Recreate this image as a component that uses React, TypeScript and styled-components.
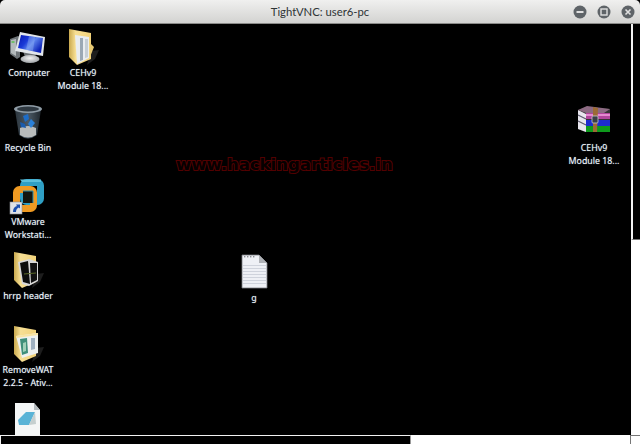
import React from 'react'
import styled, { createGlobalStyle } from 'styled-components'

const GlobalStyle = createGlobalStyle`
  html, body {
    margin: 0;
    padding: 0;
    background: #000;
    overflow: hidden;
  }
`

const ComputerIcon = () => (
  <svg width="40" height="40" viewBox="0 0 40 40">
    <defs>
      <linearGradient id="pcScreen" x1="0" y1="0" x2="1" y2="0.6">
        <stop offset="0" stopColor="#0616b0" />
        <stop offset="0.4" stopColor="#1a3ad8" />
        <stop offset="0.62" stopColor="#5f86ee" />
        <stop offset="1" stopColor="#0c22b8" />
      </linearGradient>
      <radialGradient id="pcStand" cx="0.5" cy="0.4" r="0.7">
        <stop offset="0" stopColor="#f4f4f4" />
        <stop offset="1" stopColor="#8d9296" />
      </radialGradient>
    </defs>
    <path d="M1 12 L9 9 L11 10 L11 30 L8 32 L1 27 Z" fill="#6e7478" />
    <path d="M2 13 L7 12 L7 29 L2 26 Z" fill="#b4babc" />
    <rect x="2.5" y="14" width="3" height="2" fill="#6fbf6a" />
    <path d="M14 24 L16 30 L26 31 L27 27 Z" fill="#6c7175" />
    <ellipse cx="21" cy="32" rx="9.5" ry="4" fill="url(#pcStand)" />
    <path d="M6 24 L11 5 L36 10 L34 29 Z" fill="#e2e6ea" />
    <path d="M9 21 L12 8 L34 11 L32 26 Z" fill="url(#pcScreen)" />
    <path d="M20 9.2 L26 10 L24 24 L17 22.8 Z" fill="#8fb0f4" opacity="0.45" />
  </svg>
)

type FolderProps = { paper: 'white' | 'dark' | 'app' }

const FolderIcon = ({ paper }: FolderProps) => (
  <svg width="40" height="40" viewBox="0 0 40 40">
    <defs>
      <linearGradient id={`fold-${paper}`} x1="0" y1="0" x2="1" y2="0">
        <stop offset="0" stopColor="#c9a94e" />
        <stop offset="0.3" stopColor="#f7df94" />
        <stop offset="1" stopColor="#f2d27a" />
      </linearGradient>
    </defs>
    <path d="M28 24 L36 23 L32 32 L24 38 Z" fill="#2a2a2a" opacity="0.7" />
    <path d="M6 2 L28 6 L28 32 L14 38 L6 30 Z" fill={`url(#fold-${paper})`} />
    {paper === 'white' && (
      <g>
        <path d="M12 8 L26 10 L26 31 L14 37 Z" fill="#e9edf0" />
        <path d="M17 11 L20 11 L20 33 L17 34 Z" fill="#9aa8b4" />
        <path d="M22 12 L25 12 L25 30 L22 31 Z" fill="#c5ced5" />
        <path d="M27 16 L31 20 L27 30 Z" fill="#e6c872" />
      </g>
    )}
    {paper === 'dark' && (
      <g>
        <path d="M10 12 L21 9 L30 12 L30 31 L21 36 L14 34 Z" fill="#d8d8d8" />
        <path d="M12 13 L20 11 L22 34 L15 32 Z" fill="#0d0d0d" />
        <path d="M22 13 L29 13 L29 30 L23 33 Z" fill="#111" />
        <path d="M16 24 L28 23" stroke="#5c6a2a" strokeWidth="1" />
      </g>
    )}
    {paper === 'app' && (
      <g>
        <path d="M8 12 L30 9 L30 29 L14 34 Z" fill="#eef1f0" />
        <path d="M12 15 L19 14 L20 29 L14 31 Z" fill="#3f8f7a" />
        <path d="M15 19 L18 18 L18 27 L15 28 Z" fill="#9fd0b8" />
        <path d="M23 14 L27 14 L27 25 L23 26 Z" fill="#9fb0bf" />
        <path d="M8 12 L30 9 L30 11 L8 14 Z" fill="#f9e4a3" />
      </g>
    )}
  </svg>
)

const RecycleIcon = () => (
  <svg width="40" height="40" viewBox="0 0 40 40">
    <defs>
      <linearGradient id="binBody" x1="0" y1="0" x2="1" y2="0">
        <stop offset="0" stopColor="#2a343c" />
        <stop offset="0.5" stopColor="#4c5a66" />
        <stop offset="1" stopColor="#20282e" />
      </linearGradient>
    </defs>
    <path d="M7 8 L11 33 Q20 40 29 33 L33 8 Z" fill="url(#binBody)" />
    <path d="M12 26 Q20 22 28 26 L28 33 Q20 38 12 33 Z" fill="#b9bcbc" />
    <ellipse cx="20" cy="7" rx="14" ry="4" fill="#8f9ca6" />
    <ellipse cx="20" cy="7" rx="11" ry="2.5" fill="#2e3840" />
    <path d="M15 14 L20 12 L21 17 L17 20 Z" fill="#1d6dc8" />
    <path d="M23 17 L27 21 L23 26 L20 22 Z" fill="#2a80d8" />
    <path d="M12 20 L17 22 L18 26 L13 25 Z" fill="#1a5cae" />
  </svg>
)

const VmwareIcon = () => (
  <svg width="40" height="40" viewBox="0 0 40 40">
    <rect x="15.5" y="6.5" width="17" height="19" rx="3" fill="none" stroke="#2f9fc4" strokeWidth="7" />
    <path d="M12 3.5 L33 3.5 L33 6 L14 6 Z" fill="#5cc0dc" />
    <rect x="8.5" y="13.5" width="17" height="19" rx="3" fill="none" stroke="#ef9a22" strokeWidth="7" />
    <rect x="15" y="15" width="10" height="12" fill="#14160f" />
    <path d="M15 15 L25 15 L25 27" fill="none" stroke="#2f8fb0" strokeWidth="1" />
    <rect x="2" y="26" width="12" height="12" fill="#dfe2e6" stroke="#8d9094" strokeWidth="0.6" />
    <path d="M5 36 Q5 31 9 30 L8 28.5 L12 28.5 L12 32.5 L10.8 31.5 Q8 32.5 8 36 Z" fill="#1b4fae" />
  </svg>
)

const NotepadIcon = () => (
  <svg width="40" height="40" viewBox="0 0 40 40">
    <path d="M7 3 L26 3 L32 10 L32 40 L7 40 Z" fill="#f4f6f6" />
    <path d="M26 3 L26 10 L32 10 Z" fill="#b5bcbf" />
    <path d="M10 20 L18 12 L27 12 L21 25 L11 25 Z" fill="#59b3d6" />
    <path d="M21 25 L27 12 L28 24 Z" fill="#c5cfcf" />
  </svg>
)

const RarIcon = () => (
  <svg width="40" height="40" viewBox="0 0 40 40">
    <path d="M4 8 L13 5 L36 7 L36 30 L11 30 L4 27 Z" fill="#333" />
    <path d="M4 8 L12 12 L12 30 L4 27 Z" fill="#e8e6ee" />
    <path d="M4 13 L12 17 M4 19 L12 23" stroke="#5d5a6e" strokeWidth="1.2" />
    <path d="M4 8 L13 4 L36 7 L30 11 L12 11 Z" fill="#8c6a82" />
    <rect x="12" y="11" width="24" height="6" fill="#b2459c" />
    <rect x="12" y="12" width="24" height="2" fill="#e58ad0" />
    <rect x="12" y="18" width="24" height="6" fill="#1d2ccf" />
    <rect x="12" y="24" width="24" height="6" fill="#0e9a1c" />
    <path d="M19 5 L24 6 L23 30 L19 30 Z" fill="#9c6a34" />
    <rect x="18" y="14" width="6" height="7" rx="1" fill="#3a3f46" stroke="#c8ccd0" strokeWidth="0.8" />
  </svg>
)

const FileIcon = () => (
  <svg width="40" height="40" viewBox="0 0 40 40">
    <path d="M8 3 L25 3 L33 11 L33 36 L8 36 Z" fill="#eef0f5" stroke="#77797d" strokeWidth="0.8" />
    <path d="M25 3 L25 11 L33 11 Z" fill="#aeb1b6" />
    {[13, 16, 19, 22, 25, 28, 31].map((y) => (
      <rect key={y} x="9" y={y} width="23" height="1" fill="#cfd3dc" />
    ))}
    {[10, 13, 16, 19].map((x) => (
      <rect key={x} x={x} y="4" width="1.4" height="1.4" fill="#8b8d92" />
    ))}
  </svg>
)

const desktopItems = [
  { x: 0, y: 3, label: ['Computer'], icon: <ComputerIcon /> },
  { x: 54, y: 3, label: ['CEHv9', 'Module 18...'], icon: <FolderIcon paper="white" /> },
  { x: -1, y: 78, label: ['Recycle Bin'], icon: <RecycleIcon /> },
  { x: -1, y: 152, label: ['VMware', 'Workstati...'], icon: <VmwareIcon /> },
  { x: -1, y: 226, label: ['hrrp header'], icon: <FolderIcon paper="dark" /> },
  { x: -1, y: 300, label: ['RemoveWAT', '2.2.5 - Ativ...'], icon: <FolderIcon paper="app" /> },
  { x: -1, y: 376, label: [], icon: <NotepadIcon /> },
  { x: 565, y: 78, label: ['CEHv9', 'Module 18...'], icon: <RarIcon /> },
  { x: 225, y: 228, label: ['g'], icon: <FileIcon /> },
]

export default function App() {
  return (
    <Window>
      <GlobalStyle />
      <TitleBar>
        <Title>TightVNC: user6-pc</Title>
        <WindowButtons>
          <WindowButton>
            <svg width="14" height="14" viewBox="0 0 14 14">
              <circle cx="7" cy="7" r="6.5" fill="#5f6468" />
              <rect x="3.5" y="6" width="7" height="2" fill="#e0e0e0" />
            </svg>
          </WindowButton>
          <WindowButton>
            <svg width="14" height="14" viewBox="0 0 14 14">
              <circle cx="7" cy="7" r="6.5" fill="#5f6468" />
              <rect x="4" y="4" width="6" height="6" fill="none" stroke="#e0e0e0" strokeWidth="1.4" />
            </svg>
          </WindowButton>
          <WindowButton>
            <svg width="14" height="14" viewBox="0 0 14 14">
              <circle cx="7" cy="7" r="6.5" fill="#5f6468" />
              <path d="M4.5 4.5 L9.5 9.5 M9.5 4.5 L4.5 9.5" stroke="#e0e0e0" strokeWidth="1.6" />
            </svg>
          </WindowButton>
        </WindowButtons>
      </TitleBar>

      <MainRow>
        <Desktop>
          {desktopItems.map((item, i) => (
            <DesktopIcon key={i} $x={item.x} $y={item.y}>
              {item.icon}
              {item.label.map((line) => (
                <IconLabel key={line}>{line}</IconLabel>
              ))}
            </DesktopIcon>
          ))}
          <Watermark>www.hackingarticles.in</Watermark>
        </Desktop>
        <VScrollTrack>
          <VScrollThumb />
        </VScrollTrack>
      </MainRow>

      <BottomRow>
        <HScrollTrack>
          <HScrollThumb />
        </HScrollTrack>
        <Corner />
      </BottomRow>
    </Window>
  )
}

const Window = styled.div`
  width: 640px;
  height: 444px;
  display: flex;
  flex-direction: column;
  background: #000;
  overflow: hidden;
`

const TitleBar = styled.header`
  position: relative;
  height: 24px;
  flex: none;
  display: flex;
  align-items: center;
  justify-content: center;
  box-sizing: border-box;
  border-radius: 5px 5px 0 0;
  background: linear-gradient(#f0f0ef, #d3d3d1);
  border-bottom: 1px solid #8a8a88;
`

const Title = styled.span`
  font-family: 'Lato', sans-serif;
  font-size: 11.3px;
  color: #2e3436;
`

const WindowButtons = styled.div`
  position: absolute;
  right: 5px;
  top: 5px;
  display: flex;
  gap: 10px;
`

const WindowButton = styled.div`
  width: 14px;
  height: 14px;
  display: flex;

  svg {
    filter: blur(0.3px);
  }
`

const MainRow = styled.div`
  flex: 1;
  min-height: 0;
  display: flex;
`

const Desktop = styled.main`
  position: relative;
  flex: 1;
  overflow: hidden;
  background: #000;
`

const DesktopIcon = styled.div<{ $x: number; $y: number }>`
  position: absolute;
  left: ${(p) => p.$x}px;
  top: ${(p) => p.$y}px;
  width: 58px;
  display: flex;
  flex-direction: column;
  align-items: center;

  svg {
    filter: blur(0.35px);
  }
`

const IconLabel = styled.span`
  font-family: 'Noto Sans', sans-serif;
  font-size: 8.8px;
  line-height: 12.5px;
  color: #f2f6fa;
  white-space: nowrap;
  text-shadow: 0 0 1px #6f8aa0;
`

const Watermark = styled.div`
  position: absolute;
  left: 176px;
  top: 129px;
  font-family: 'DejaVu Sans', sans-serif;
  font-weight: 700;
  font-size: 16.5px;
  line-height: 24px;
  white-space: nowrap;
  color: #060000;
  -webkit-text-stroke: 2px #520000;
  paint-order: stroke fill;
`

const VScrollTrack = styled.aside`
  width: 9px;
  flex: none;
  background: #fff;
`

const VScrollThumb = styled.div`
  height: 216px;
  box-sizing: border-box;
  background: #000;
  border-left: 2px solid #f2f2f2;
  border-bottom: 1px solid #777;
`

const BottomRow = styled.div`
  height: 9px;
  flex: none;
  display: flex;
  background: #fff;
`

const HScrollTrack = styled.div`
  flex: 1;
  background: #fff;
`

const HScrollThumb = styled.div`
  width: 411px;
  height: 9px;
  box-sizing: border-box;
  background: #000;
  border-top: 1px solid #f2f2f2;
  border-left: 1px solid #f2f2f2;
  border-right: 1px solid #999;
`

const Corner = styled.div`
  width: 10px;
  flex: none;
  box-sizing: border-box;
  background: #fff;
  border-top: 1px solid #777;
  border-left: 1px solid #777;
`
